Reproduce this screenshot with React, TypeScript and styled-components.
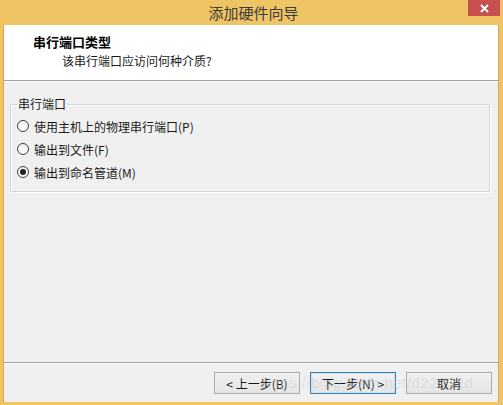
import React from "react";
import styled, { createGlobalStyle } from "styled-components";

const Global = createGlobalStyle`
  html, body { margin: 0; padding: 0; background: #efc464; }
  body { font-family: "Noto Sans CJK SC", "Microsoft YaHei", sans-serif; font-size: 12px; color: #000; }
`;

const Window = styled.div`
  width: 503px;
  height: 405px;
  background: #efc464;
  display: flex;
  flex-direction: column;
  box-sizing: border-box;
  position: relative;
  overflow: hidden;
`;

const TitleBar = styled.div`
  height: 25px;
  flex: none;
  display: flex;
  align-items: center;
  justify-content: center;
  position: relative;
`;

const Title = styled.span`
  font-size: 15px;
  color: #3a3a3a;
  line-height: 25px;
  margin-left: 4px;
`;

const CloseButton = styled.div`
  position: absolute;
  top: 0;
  right: 3px;
  width: 32px;
  height: 16px;
  background: #c75050;
  color: #fff;
  display: flex;
  align-items: center;
  justify-content: center;
`;

const Client = styled.div`
  flex: 1;
  margin: 0 4px 3px 3px;
  display: flex;
  flex-direction: column;
  background: #f0f0f0;
  border-left: 1px solid #d9a74e;
  border-right: 1px solid #d9a74e;
`;

const Header = styled.div`
  height: 56px;
  background: #fff;
  border-bottom: 1px solid #a0a0a0;
  flex: none;
  display: flex;
  flex-direction: column;
  padding: 8px 0 0 29px;
  box-sizing: border-box;
`;

const HeaderTitle = styled.div`
  font-weight: bold;
  font-size: 13px;
  line-height: 18px;
`;

const HeaderSub = styled.div`
  font-size: 12px;
  line-height: 19px;
  padding-left: 29px;
  color: #1a1a1a;
`;

const Body = styled.div`
  flex: 1;
  padding: 15px 8px 0 6px;
  border-top: 1px solid #fff;
`;

const GroupBox = styled.fieldset`
  margin: 0;
  padding: 6px 0 8px 6px;
  border: 1px solid #d5d5d5;
  box-shadow: inset 1px 1px 0 #fff, 1px 1px 0 #fff;
  display: flex;
  flex-direction: column;
  gap: 5px;
  height: 95px;
  box-sizing: border-box;
`;

const Legend = styled.legend`
  padding: 0 1px 0 1px;
  margin-left: 0px;
  font-size: 12px;
  line-height: 14px;
  color: #1a1a1a;
`;

const RadioRow = styled.label`
  display: flex;
  align-items: center;
  gap: 5px;
  height: 18px;
  font-size: 12px;
  color: #1a1a1a;
`;

const RadioCircle = styled.span<{ $checked?: boolean }>`
  width: 12px;
  height: 12px;
  border-radius: 50%;
  border: 1px solid #3f3f3f;
  background: linear-gradient(#f0f0f0, #fff);
  box-sizing: border-box;
  display: flex;
  align-items: center;
  justify-content: center;
  &::after {
    content: "";
    display: ${(p) => (p.$checked ? "block" : "none")};
    width: 6px;
    height: 6px;
    border-radius: 50%;
    background: #222;
  }
`;

const Footer = styled.div`
  height: 40px;
  flex: none;
  border-top: 1px solid #a0a0a0;
  box-shadow: inset 0 1px 0 #fff;
  display: flex;
  justify-content: flex-end;
  align-items: flex-start;
  padding: 9px 6px 0 0;
  gap: 10px;
  box-sizing: border-box;
`;

const Button = styled.div<{ $default?: boolean }>`
  width: 86px;
  height: 22px;
  box-sizing: border-box;
  border: 1px solid ${(p) => (p.$default ? "#3c7fb1" : "#acacac")};
  background: linear-gradient(#f0f0f0, #e5e5e5);
  display: flex;
  align-items: center;
  justify-content: center;
  font-size: 12px;
  color: #1a1a1a;
  box-shadow: ${(p) => (p.$default ? "inset 0 0 0 1px #c6e3f7" : "none")};
`;

const Watermark = styled.div`
  position: absolute;
  left: 262px;
  top: 374px;
  font-family: "Liberation Sans", sans-serif;
  font-size: 15px;
  color: rgba(190, 200, 210, 0.4);
  letter-spacing: 0.5px;
  pointer-events: none;
`;

export default function App() {
  return (
    <>
      <Global />
      <Window>
        <TitleBar>
          <Title>添加硬件向导</Title>
          <CloseButton>
            <svg width="9" height="9" viewBox="0 0 9 9">
              <path d="M1 1 L8 8 M8 1 L1 8" stroke="#fff" strokeWidth="1.8" />
            </svg>
          </CloseButton>
        </TitleBar>
        <Client>
          <Header>
            <HeaderTitle>串行端口类型</HeaderTitle>
            <HeaderSub>该串行端口应访问何种介质?</HeaderSub>
          </Header>
          <Body>
            <GroupBox>
              <Legend>串行端口</Legend>
              <RadioRow>
                <RadioCircle />
                使用主机上的物理串行端口(P)
              </RadioRow>
              <RadioRow>
                <RadioCircle />
                输出到文件(F)
              </RadioRow>
              <RadioRow>
                <RadioCircle $checked />
                输出到命名管道(M)
              </RadioRow>
            </GroupBox>
          </Body>
          <Footer>
            <Button>&lt; 上一步(B)</Button>
            <Button $default>下一步(N) &gt;</Button>
            <Button>取消</Button>
          </Footer>
        </Client>
        <Watermark>https://blog.csdn.net/d22272d</Watermark>
      </Window>
    </>
  );
}
